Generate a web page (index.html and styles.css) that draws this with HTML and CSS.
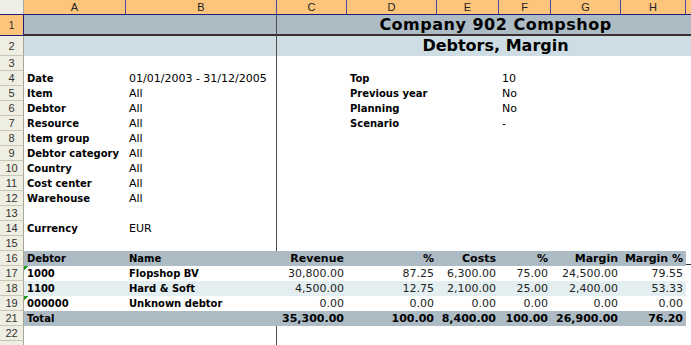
FILE: index.html
```html
<!DOCTYPE html>
<html>
<head>
<meta charset="utf-8">
<link rel="stylesheet" href="styles.css">
</head>
<body>
<div class="sheet">
  <div class="row colhead">
    <div class="corner"></div>
    <div class="ch">A</div><div class="ch">B</div><div class="ch">C</div><div class="ch">D</div>
    <div class="ch">E</div><div class="ch">F</div><div class="ch">G</div><div class="ch">H</div><div class="ch last"></div>
  </div>

  <div class="row r1">
    <div class="rh sel">1</div>
    <div class="c span2 frz band1"></div>
    <div class="c title t1 band1">Company 902 Compshop</div>
  </div>
  <div class="row r2">
    <div class="rh">2</div>
    <div class="c span2 frz band2"></div>
    <div class="c title t2 band2">Debtors, Margin</div>
  </div>

  <div class="row"><div class="rh">3</div><div class="c"></div><div class="c frz"></div><div class="c rest"></div></div>
  <div class="row"><div class="rh">4</div><div class="c lbl">Date</div><div class="c val frz">01/01/2003 - 31/12/2005</div><div class="c"></div><div class="c lbl">Top</div><div class="c"></div><div class="c val">10</div><div class="c rest2"></div></div>
  <div class="row"><div class="rh">5</div><div class="c lbl">Item</div><div class="c val frz">All</div><div class="c"></div><div class="c lbl">Previous year</div><div class="c"></div><div class="c val">No</div><div class="c rest2"></div></div>
  <div class="row"><div class="rh">6</div><div class="c lbl">Debtor</div><div class="c val frz">All</div><div class="c"></div><div class="c lbl">Planning</div><div class="c"></div><div class="c val">No</div><div class="c rest2"></div></div>
  <div class="row"><div class="rh">7</div><div class="c lbl">Resource</div><div class="c val frz">All</div><div class="c"></div><div class="c lbl">Scenario</div><div class="c"></div><div class="c val">-</div><div class="c rest2"></div></div>
  <div class="row"><div class="rh">8</div><div class="c lbl">Item group</div><div class="c val frz">All</div><div class="c rest"></div></div>
  <div class="row"><div class="rh">9</div><div class="c lbl">Debtor category</div><div class="c val frz">All</div><div class="c rest"></div></div>
  <div class="row"><div class="rh">10</div><div class="c lbl">Country</div><div class="c val frz">All</div><div class="c rest"></div></div>
  <div class="row"><div class="rh">11</div><div class="c lbl">Cost center</div><div class="c val frz">All</div><div class="c rest"></div></div>
  <div class="row"><div class="rh">12</div><div class="c lbl">Warehouse</div><div class="c val frz">All</div><div class="c rest"></div></div>
  <div class="row"><div class="rh">13</div><div class="c"></div><div class="c frz"></div><div class="c rest"></div></div>
  <div class="row"><div class="rh">14</div><div class="c lbl">Currency</div><div class="c val frz">EUR</div><div class="c rest"></div></div>
  <div class="row"><div class="rh">15</div><div class="c"></div><div class="c frz"></div><div class="c rest"></div></div>

  <div class="row thead">
    <div class="rh">16</div>
    <div class="c lbl">Debtor</div><div class="c lbl">Name</div>
    <div class="c lbl num">Revenue</div><div class="c lbl num">%</div><div class="c lbl num">Costs</div>
    <div class="c lbl num">%</div><div class="c lbl num">Margin</div><div class="c lbl num">Margin %</div>
    <div class="c tail"></div>
  </div>
  <div class="row data">
    <div class="rh">17</div>
    <div class="c lbl flag">1000</div><div class="c lbl">Flopshop BV</div>
    <div class="c num">30,800.00</div><div class="c num">87.25</div><div class="c num">6,300.00</div>
    <div class="c num">75.00</div><div class="c num">24,500.00</div><div class="c num">79.55</div><div class="c"></div>
  </div>
  <div class="row data alt">
    <div class="rh">18</div>
    <div class="c lbl flag">1100</div><div class="c lbl">Hard &amp; Soft</div>
    <div class="c num">4,500.00</div><div class="c num">12.75</div><div class="c num">2,100.00</div>
    <div class="c num">25.00</div><div class="c num">2,400.00</div><div class="c num">53.33</div><div class="c blank"></div>
  </div>
  <div class="row data">
    <div class="rh">19</div>
    <div class="c lbl flag">000000</div><div class="c lbl">Unknown debtor</div>
    <div class="c num">0.00</div><div class="c num">0.00</div><div class="c num">0.00</div>
    <div class="c num">0.00</div><div class="c num">0.00</div><div class="c num">0.00</div><div class="c"></div>
  </div>
  <div class="row total">
    <div class="rh">21</div>
    <div class="c lbl">Total</div><div class="c"></div>
    <div class="c num">35,300.00</div><div class="c num">100.00</div><div class="c num">8,400.00</div>
    <div class="c num">100.00</div><div class="c num">26,900.00</div><div class="c num">76.20</div><div class="c blank"></div>
  </div>
  <div class="row"><div class="rh">22</div><div class="c"></div><div class="c frz"></div><div class="c rest"></div></div>
  <div class="row"><div class="rh"></div><div class="c"></div><div class="c frz"></div><div class="c rest"></div></div>
</div>
</body>
</html>
```
FILE: styles.css
```css
html, body {
  margin: 0;
  padding: 0;
  background: #ffffff;
  overflow: hidden;
}
body {
  width: 691px;
  height: 345px;
  font-family: "DejaVu Sans", Verdana, sans-serif;
  color: #000;
}
.sheet {
  display: flex;
  flex-direction: column;
  width: 691px;
}
.row {
  display: grid;
  grid-template-columns: 24px 102px 151px 70px 90px 62px 52px 70px 65px 1fr;
  height: 15px;
  box-sizing: border-box;
}
.c {
  box-sizing: border-box;
  padding: 0 3px;
  white-space: nowrap;
  overflow: visible;
  line-height: 15px;
  height: 15px;
}
.rest { grid-column: 4 / -1; }
.rest2 { grid-column: 8 / -1; }
.frz { border-right: 1px solid #4c4c4c; }

/* column header */
.colhead {
  height: 15px;
  background: #fdc47c;
  border-bottom: 1px solid #1e1e7a;
}
.corner {
  background: #efeee6;
  border-right: 1px solid #a9a89c;
}
.ch {
  font-family: "Liberation Sans", Arial, sans-serif;
  font-size: 11px;
  line-height: 14px;
  text-align: center;
  color: #222;
  border-right: 1px solid #4b4ba0;
  box-sizing: border-box;
}
.ch.last { border-right: none; }

/* row headers */
.rh {
  box-sizing: border-box;
  background: #efeee3;
  border-right: 1px solid #a7a596;
  border-bottom: 1px solid #c9c7b7;
  font-family: "Liberation Sans", Arial, sans-serif;
  font-size: 11px;
  line-height: 14px;
  text-align: center;
  color: #333;
}
.rh.sel {
  background: #fdc47c;
  border-right: 1px solid #1e1e7a;
  border-bottom: 1px solid #1e1e7a;
  line-height: 20px;
}

/* title rows */
.r1 { height: 21px; }
.r1 .c { height: 21px; border-bottom: 2px solid #3b2f2f; }
.r1 .rh { height: 21px; }
.r2 { height: 20px; }
.r2 .c, .r2 .rh { height: 20px; line-height: 20px; }
.span2 { grid-column: 2 / 4; }
.title {
  grid-column: 4 / -1;
  text-align: center;
  padding-left: 26px;
  font-weight: bold;
  font-size: 16px;
  color: #000;
}
.t1 { line-height: 19px; letter-spacing: 0.5px; }
.t2 { line-height: 21px; }
.band1 { background: #adbbc5; }
.band2 { background: #cddde3; }

/* body text */
.lbl {
  font-weight: bold;
  font-size: 10px;
  line-height: 16px;
}
.val {
  font-size: 11px;
  line-height: 16px;
}
.num {
  text-align: right;
  font-size: 11px;
  line-height: 16px;
  color: #222;
}
.lbl.num { color: #000; }

/* table */
.thead .c, .total .c { background: #adbbc5; }
.thead .tail { background: transparent; border-bottom: 1px solid #333; height: 14px; }
.alt .c { background: #e3eef0; }
.alt .blank, .total .blank { background: transparent; }
.total .num { font-weight: bold; font-size: 11px; color: #000; }
.flag {
  background-image: linear-gradient(135deg, #1a9b1a 0, #1a9b1a 3px, transparent 3px);
  background-repeat: no-repeat;
}
```
